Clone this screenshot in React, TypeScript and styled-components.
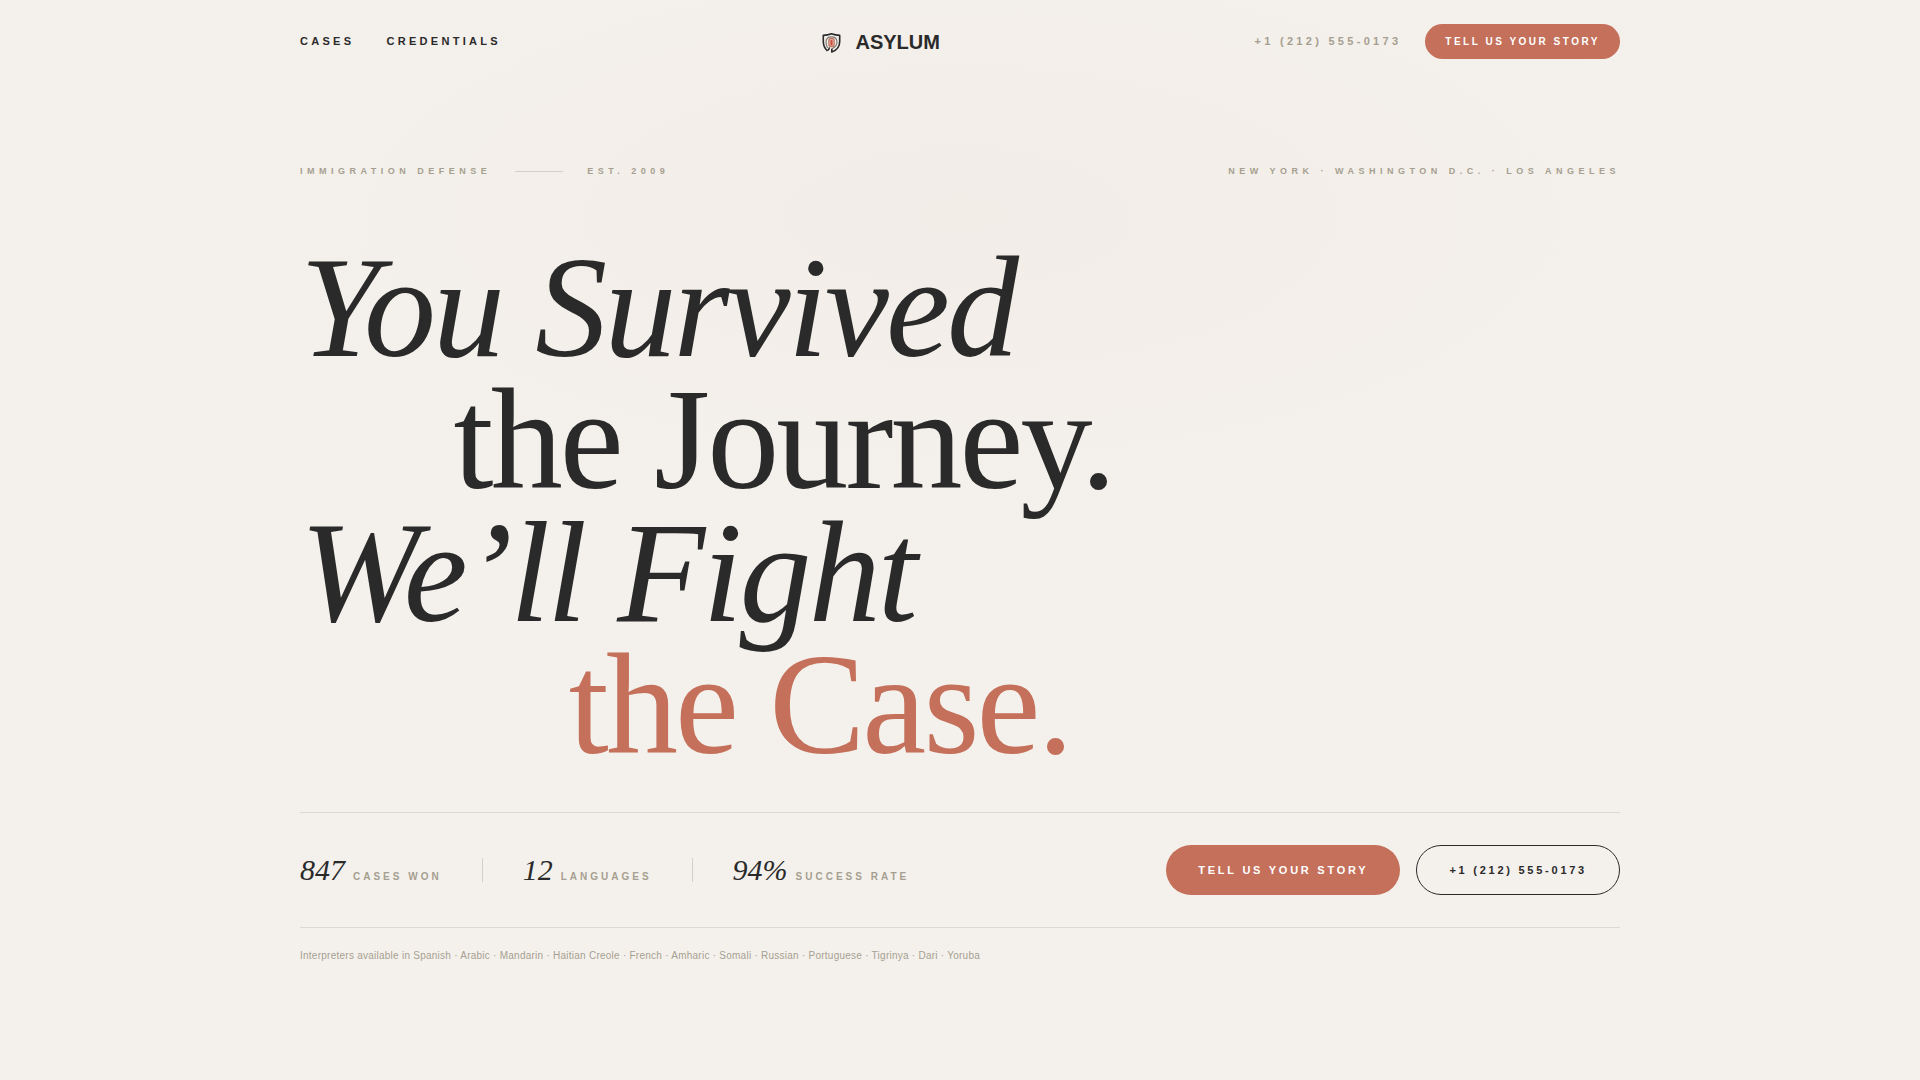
import React from "react";
import styled, { createGlobalStyle } from "styled-components";

const color = {
  paper: "#f4f1ec",
  ink: "#2a2a2a",
  clay: "#c4705a",
  stone: "#a69f91",
  rule: "#dedad2",
};

const sans = `"Liberation Sans", Arial, Helvetica, sans-serif`;
const serif = `"Liberation Serif", "Times New Roman", Times, serif`;

const GlobalStyle = createGlobalStyle`
  *, *::before, *::after { box-sizing: border-box; }
  body {
    margin: 0;
    background: ${color.paper};
    color: ${color.ink};
    font-family: ${sans};
  }
`;

const Page = styled.div`
  min-height: 100vh;
  background: radial-gradient(
    ellipse 70% 50% at 50% 20%,
    rgba(196, 112, 90, 0.03) 0%,
    rgba(196, 112, 90, 0) 70%
  );
`;

const Container = styled.div`
  max-width: 1400px;
  margin: 0 auto;
  padding: 0 40px;
`;

const Header = styled.header`
  display: flex;
  align-items: center;
  justify-content: space-between;
  padding: 24px 0;
`;

const Nav = styled.nav`
  display: flex;
  gap: 32px;
`;

const TextLink = styled.a<{ $muted?: boolean }>`
  color: ${(p) => (p.$muted ? color.stone : color.ink)};
  font-size: 11px;
  font-weight: 700;
  line-height: 17px;
  letter-spacing: 0.3em;
  text-decoration: none;
  text-transform: uppercase;
`;

const Brand = styled.a`
  display: flex;
  align-items: center;
  gap: 8px;
  color: ${color.ink};
  font-size: 20px;
  font-weight: 700;
  line-height: 30px;
  text-decoration: none;
`;

const Contact = styled.div`
  display: flex;
  align-items: center;
  gap: 24px;
`;

const Pill = styled.button<{ $size: "small" | "large" }>`
  border: 0;
  border-radius: 999px;
  padding: ${(p) => (p.$size === "small" ? "10px 20px" : "17px 32px")};
  background: ${color.clay};
  color: #ffffff;
  font-family: ${sans};
  font-size: ${(p) => (p.$size === "small" ? "10px" : "11px")};
  font-weight: 700;
  line-height: ${(p) => (p.$size === "small" ? "15px" : "16px")};
  letter-spacing: 0.25em;
  text-transform: uppercase;
  cursor: pointer;
`;

const OutlinePill = styled.a`
  border: 1px solid ${color.ink};
  border-radius: 999px;
  padding: 16px 32px;
  color: ${color.ink};
  font-size: 11px;
  font-weight: 700;
  line-height: 16px;
  letter-spacing: 0.25em;
  text-decoration: none;
`;

const Hero = styled.main`
  padding: 81px 0;
`;

const Eyebrow = styled.div`
  display: flex;
  align-items: center;
  justify-content: space-between;
  color: ${color.stone};
  font-size: 9px;
  font-weight: 700;
  line-height: 14px;
  letter-spacing: 0.5em;
  text-transform: uppercase;
`;

const EyebrowGroup = styled.div`
  display: flex;
  align-items: center;
  gap: 24px;
`;

const Dash = styled.span`
  width: 48px;
  height: 1px;
  background: #d5d0c7;
`;

const Headline = styled.h1`
  margin: 64px 0 40px;
  font-family: ${serif};
  font-size: 144px;
  font-weight: 400;
  line-height: 0.92;
  letter-spacing: -0.02em;
`;

const Line = styled.span<{ $indent?: string; $italic?: boolean; $accent?: boolean }>`
  display: block;
  margin-left: ${(p) => p.$indent ?? "0"};
  font-style: ${(p) => (p.$italic ? "italic" : "normal")};
  color: ${(p) => (p.$accent ? color.clay : color.ink)};
`;

const Proof = styled.section`
  display: flex;
  align-items: center;
  justify-content: space-between;
  border-top: 1px solid ${color.rule};
  border-bottom: 1px solid ${color.rule};
  padding: 32px 0;
`;

const Stats = styled.div`
  display: flex;
  align-items: center;
  gap: 40px;
`;

const Divider = styled.span`
  width: 1px;
  height: 24px;
  background: #d5d0c7;
`;

const Stat = styled.div`
  display: flex;
  align-items: baseline;
  gap: 8px;
`;

const Figure = styled.span`
  font-family: ${serif};
  font-size: 30px;
  font-style: italic;
  line-height: 30px;
`;

const StatLabel = styled.span`
  color: ${color.stone};
  font-size: 10px;
  font-weight: 700;
  line-height: 15px;
  letter-spacing: 0.3em;
  text-transform: uppercase;
`;

const Actions = styled.div`
  display: flex;
  gap: 16px;
`;

const Languages = styled.p`
  margin: 20px 0 0;
  color: ${color.stone};
  font-size: 10px;
  line-height: 15px;
  letter-spacing: 0.025em;
`;

const stats = [
  { figure: "847", label: "Cases Won" },
  { figure: "12", label: "Languages" },
  { figure: "94%", label: "Success Rate" },
];

const languages = [
  "Spanish", "Arabic", "Mandarin", "Haitian Creole", "French", "Amharic",
  "Somali", "Russian", "Portuguese", "Tigrinya", "Dari", "Yoruba",
];

function ShieldMark() {
  return (
    <svg width="32" height="32" viewBox="0 0 32 32" fill="none" aria-hidden="true">
      <path
        d="M12.4 24.8C9.4 22.4 8.3 19.4 8.3 15.6V9.4C11.3 9.2 14 8.600 16.500 7.700C19 8.600 21.700 9.200 24.700 9.400V15.600C24.700 20.600 21.600 24.400 16.800 26V22.800"
        stroke={color.ink}
        strokeWidth="1.600"
        strokeLinejoin="round"
      />
      <path
        d="M12.600 21.800C11.500 20.200 11 18.200 11 16C11 12.900 13.200 10.900 16.500 10.900C19.800 10.900 22 12.900 22 16C22 18.900 20.200 21.200 16.800 22.800"
        stroke={color.ink}
        strokeWidth="1.200"
        strokeOpacity="0.600"
      />
      <path
        d="M12.400 24.800C13.800 23.600 14.400 22.700 14.500 21.400"
        stroke={color.ink}
        strokeWidth="1.500"
      />
      <rect x="13.800" y="12.400" width="5.400" height="8.200" rx="2.700" fill={color.clay} fillOpacity="0.350" stroke={color.clay} strokeWidth="1.200" />
      <path d="M16.500 14.800V18.400" stroke="#c84f3c" strokeWidth="2.200" strokeLinecap="round" />
    </svg>
  );
}

export default function App() {
  return (
    <>
      <GlobalStyle />
      <Page>
        <Container>
          <Header>
            <Nav>
              <TextLink href="#cases">Cases</TextLink>
              <TextLink href="#credentials">Credentials</TextLink>
            </Nav>
            <Brand href="#top">
              <ShieldMark />
              <span>ASYLUM</span>
            </Brand>
            <Contact>
              <TextLink href="tel:+12125550173" $muted>+1 (212) 555-0173</TextLink>
              <Pill type="button" $size="small">Tell Us Your Story</Pill>
            </Contact>
          </Header>

          <Hero>
            <Eyebrow>
              <EyebrowGroup>
                <span>Immigration Defense</span>
                <Dash />
                <span>Est. 2009</span>
              </EyebrowGroup>
              <span>New York · Washington D.C. · Los Angeles</span>
            </Eyebrow>

            <Headline>
              <Line $italic>You Survived</Line>
              <Line $indent="8vw">the Journey.</Line>
              <Line $italic>We’ll Fight</Line>
              <Line $indent="14vw" $accent>the Case.</Line>
            </Headline>

            <Proof>
              <Stats>
                {stats.map((stat, i) => (
                  <React.Fragment key={stat.label}>
                    {i > 0 && <Divider />}
                    <Stat>
                      <Figure>{stat.figure}</Figure>
                      <StatLabel>{stat.label}</StatLabel>
                    </Stat>
                  </React.Fragment>
                ))}
              </Stats>
              <Actions>
                <Pill type="button" $size="large">Tell Us Your Story</Pill>
                <OutlinePill href="tel:+12125550173">+1 (212) 555-0173</OutlinePill>
              </Actions>
            </Proof>

            <Languages>Interpreters available in {languages.join(" · ")}</Languages>
          </Hero>
        </Container>
      </Page>
    </>
  );
}
